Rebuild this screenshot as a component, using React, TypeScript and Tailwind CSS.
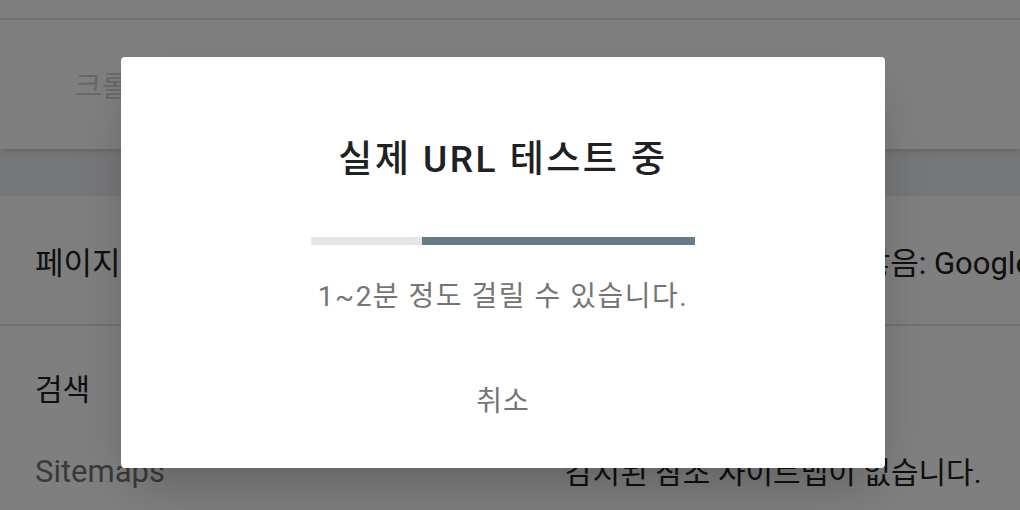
export default function App() {
  return (
    <div
      className="relative w-[1020px] h-[510px] overflow-hidden bg-[#eceef2] flex flex-col"
      style={{ fontFamily: 'Roboto, "Noto Sans CJK KR", sans-serif' }}
    >
      {/* Page underneath */}
      <div className="bg-white h-[20px] border-b-2 border-[#e0e0e0]" />
      <div className="bg-white h-[129px] flex items-center pt-[6px] shadow-md">
        <span className="ml-[75px] text-[29px] text-[#d0d0d0]">크롤링</span>
      </div>

      <div className="mt-[47px] bg-white flex-1">
        <div className="h-[130px] flex items-center pt-[8px] border-b-2 border-[#e0e0e0] px-[35px] text-[31px] text-[#202124] whitespace-nowrap">
          <span className="w-[530px] shrink-0">페이지 가져오기</span>
          <span className="shrink-0 ml-[17px]">색인 생성이 허용되지 않음: Google 검색</span>
        </div>
        <div className="px-[35px] pt-[46px] text-[30px] leading-[36px] text-[#202124]">검색</div>
        <div className="flex items-center px-[35px] mt-[41px] text-[31px] whitespace-nowrap">
          <span className="w-[530px] shrink-0 text-[#757575]">Sitemaps</span>
          <span className="shrink-0 text-[30px] text-[#202124]">감지된 참조 사이트맵이 없습니다.</span>
        </div>
      </div>

      {/* Scrim */}
      <div className="absolute inset-0 bg-black/50" />

      {/* Dialog */}
      <div className="absolute left-[121px] top-[57px] w-[764px] h-[411px] bg-white rounded-[4px] shadow-2xl flex flex-col items-center">
        <h1 className="mt-[83px] text-[37px] leading-[40px] tracking-[2.5px] font-medium text-[#202124]">
          실제 URL 테스트 중
        </h1>
        <div className="mt-[57px] w-[384px] h-[8px] bg-[#e6e6e6] flex">
          <div className="ml-[111px] flex-1 bg-[#657b88]" />
        </div>
        <p className="mt-[36px] text-[28px] leading-[32px] tracking-[1.5px] text-[#757575]">
          1~2분 정도 걸릴 수 있습니다.
        </p>
        <button className="mt-[73px] text-[28px] leading-[32px] tracking-[1px] text-[#757575]">취소</button>
      </div>
    </div>
  );
}
